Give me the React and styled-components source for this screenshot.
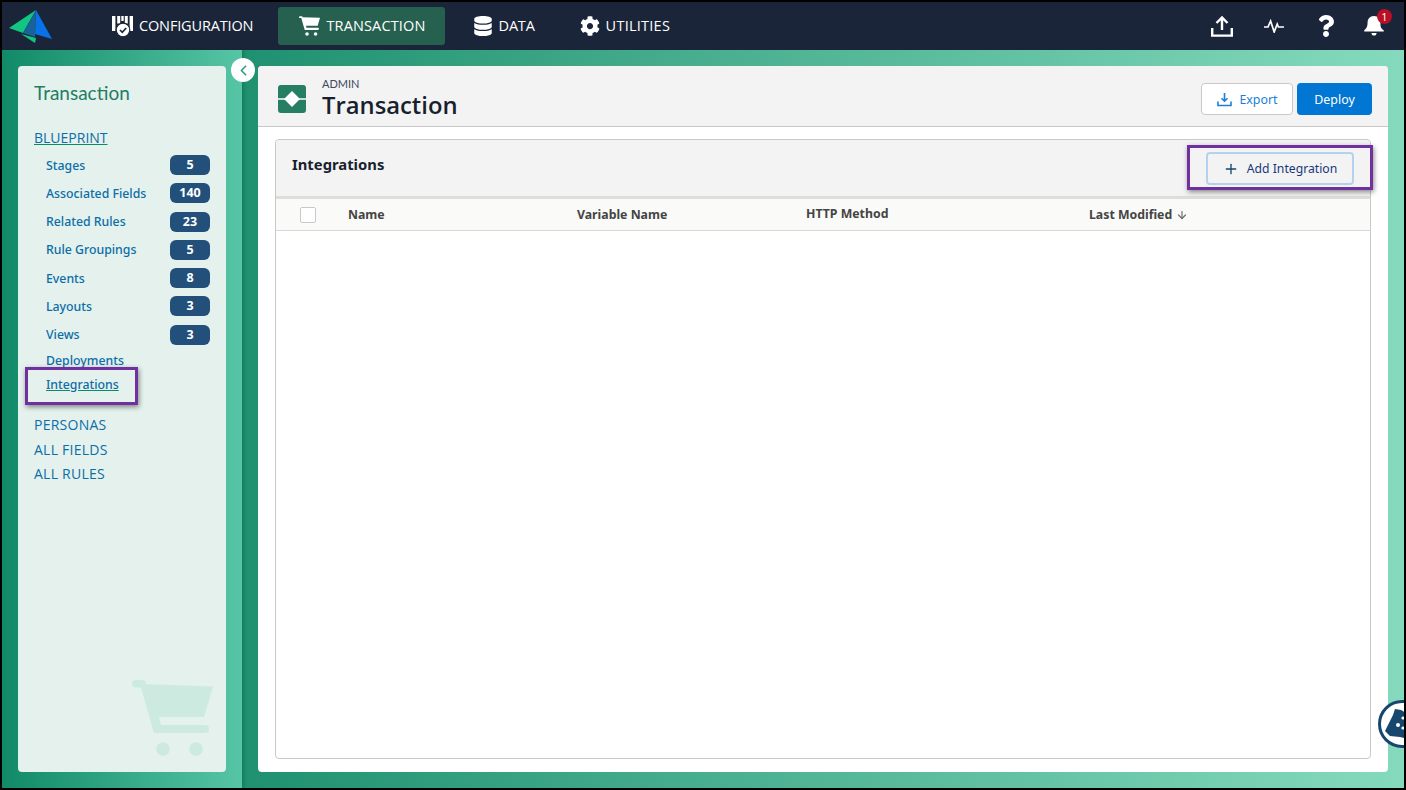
import styled, { createGlobalStyle } from "styled-components";
import { FaDatabase, FaCog, FaQuestion } from "react-icons/fa";
import { FiChevronLeft, FiArrowDown, FiPlus } from "react-icons/fi";

const GlobalStyle = createGlobalStyle`
	* {
		box-sizing: border-box;
	}
	body {
		margin: 0;
		background: #000;
		font-family: "Open Sans", "Noto Sans", sans-serif;
	}
`;

const CartIcon = ({ width = 21, height = 20, color = "#fff" }) => (
	<svg width={width} height={height} viewBox="0 0 81 76" fill={color}>
		<rect x="0" y="0" width="14" height="7.500" rx="3.700" />
		<path d="M8 4L81 6.500 72 37H27L29 45H73a4 4 0 0 1 0 8H22z" />
		<circle cx="31" cy="69" r="6.800" />
		<circle cx="64" cy="69" r="6.800" />
	</svg>
);

const ConfigIcon = () => (
	<svg width="21" height="21" viewBox="0 0 21 21" fill="#fff">
		<rect x="0" y="0" width="3.400" height="15" />
		<rect x="17.600" y="0" width="3.400" height="15" />
		<path d="M5.200 0h3v7.500h-3zM12.800 0h3v7.500h-3z" />
		<path d="M9.300 0h2.400v5H9.300z" />
		<circle cx="11" cy="14" r="6.800" stroke="#1b2539" strokeWidth="1.200" />
		<path d="M8 14l2.300 2.300 3.900-4.300" fill="none" stroke="#1b2539" strokeWidth="1.700" />
	</svg>
);

const UploadIcon = () => (
	<svg width="22" height="22" viewBox="0 0 22 22" fill="none" stroke="#fff" strokeWidth="2.400">
		<path d="M11 15V2.500M5.500 8L11 2.500 16.500 8" />
		<path d="M1.200 13v7.600h19.600V13" />
	</svg>
);

const PulseIcon = () => (
	<svg width="20" height="14" viewBox="0 0 20 14" fill="none" stroke="#fff" strokeWidth="1.700">
		<path d="M0 8h4l2.600-6 3.600 11 3-8 1.200 3H20" />
	</svg>
);

const BellIcon = () => (
	<svg width="22" height="22" viewBox="0 0 22 24" fill="#fff">
		<path d="M11 1c-4.600 0-7 3.200-7 7.400 0 4.200-1.300 6.200-3.500 8.100-.6.6-.3 1.500.6 1.500h19.800c.9 0 1.200-.9.6-1.500C18.300 14.600 18 12.600 18 8.400 18 4.200 15.600 1 11 1z" />
		<path d="M8.200 19.500h5.600c0 1.600-1.300 2.900-2.800 2.900s-2.800-1.300-2.800-2.900z" />
	</svg>
);

const Logo = () => (
	<svg width="43" height="33" viewBox="0 0 43 33">
		<path d="M0 18L27 0 14 23z" fill="#12c581" />
		<path d="M12 24l15 4-1 5z" fill="#12c581" />
		<path d="M27 0l16 29-17-5z" fill="#0a72e8" />
		<path d="M27 0L14 23l12 4z" fill="#17649b" />
	</svg>
);

const ExportIcon = () => (
	<svg width="15" height="15" viewBox="0 0 15 15" fill="none" stroke="#1b7fd6" strokeWidth="1.600">
		<path d="M7.500 1v8M4.500 6.200l3 3 3-3" />
		<path d="M1 9.500v4h13v-4" />
	</svg>
);

const ObjectIcon = () => (
	<svg width="28" height="28" viewBox="0 0 28 28">
		<rect width="28" height="28" rx="3" fill="#267f63" />
		<path d="M0 13.200h28v1.600H0z" fill="#f3f3f3" />
		<path d="M14 6l8 8-8 8-8-8z" fill="#fff" />
	</svg>
);

const navItems = [
	{ label: "CONFIGURATION", icon: <ConfigIcon />, after: 13, tracking: -0.15 },
	{ label: "TRANSACTION", icon: <CartIcon />, active: true, after: 16, tracking: 0.15 },
	{ label: "DATA", icon: <FaDatabase size={20} />, after: 21, tracking: -0.2 },
	{ label: "UTILITIES", icon: <FaCog size={20} />, after: 0, tracking: 0.25 },
];

const blueprintItems = [
	{ label: "Stages", count: 5 },
	{ label: "Associated Fields", count: 140 },
	{ label: "Related Rules", count: 23 },
	{ label: "Rule Groupings", count: 5 },
	{ label: "Events", count: 8 },
	{ label: "Layouts", count: 3 },
	{ label: "Views", count: 3 },
];

const App = () => {
	return (
		<Frame>
			<GlobalStyle />
			<TopBar>
				<LogoSlot>
					<Logo />
				</LogoSlot>
				<TopNav>
					{navItems.map((item) => (
						<TopNavItem
							key={item.label}
							$active={item.active}
							$after={item.after}
							$tracking={item.tracking}
						>
							{item.icon}
							<span>{item.label}</span>
						</TopNavItem>
					))}
				</TopNav>
				<TopActions>
					<UploadIcon />
					<PulseIcon />
					<FaQuestion size={22} color="#fff" />
					<BellSlot>
						<BellIcon />
						<BellBadge>1</BellBadge>
					</BellSlot>
				</TopActions>
			</TopBar>
			<Body>
				<SideColumn>
					<SidePanel>
						<SideTitle>Transaction</SideTitle>
						<SectionLink $current>BLUEPRINT</SectionLink>
						<SubList>
							{blueprintItems.map((item) => (
								<SubRow key={item.label}>
									<SubLink>{item.label}</SubLink>
									<Count>{item.count}</Count>
								</SubRow>
							))}
							<PlainRow>
								<SubLink>Deployments</SubLink>
							</PlainRow>
							<PlainRow $last>
								<SubLink $current>Integrations</SubLink>
								<SideCallout />
							</PlainRow>
						</SubList>
						<SectionLink>PERSONAS</SectionLink>
						<SectionLink>ALL FIELDS</SectionLink>
						<SectionLink>ALL RULES</SectionLink>
						<Watermark>
							<CartIcon width={81} height={76} color="#cdeae1" />
						</Watermark>
					</SidePanel>
					<CollapseButton>
						<FiChevronLeft size={17} color="#2aa27f" strokeWidth={2.400} />
					</CollapseButton>
				</SideColumn>
				<MainColumn>
					<Page>
						<PageHeader>
							<ObjectIcon />
							<PageTitles>
								<Eyebrow>ADMIN</Eyebrow>
								<PageTitle>Transaction</PageTitle>
							</PageTitles>
							<PageActions>
								<ExportButton>
									<ExportIcon />
									Export
								</ExportButton>
								<DeployButton>Deploy</DeployButton>
							</PageActions>
						</PageHeader>
						<PageBody>
							<Card>
								<CardHeader>
									<CardTitle>Integrations</CardTitle>
									<AddButton>
										<FiPlus size={16} color="#17466e" />
										Add Integration
										<AddCallout />
									</AddButton>
								</CardHeader>
								<TableHead>
									<Checkbox />
									<HeadCell>Name</HeadCell>
									<HeadCell>Variable Name</HeadCell>
									<HeadCell $raised>HTTP Method</HeadCell>
									<SortCell>
										Last Modified
										<FiArrowDown size={12} color="#706e6b" strokeWidth={2.400} />
									</SortCell>
								</TableHead>
							</Card>
						</PageBody>
					</Page>
				</MainColumn>
			</Body>
			<ChatBubble>
				<svg width="48" height="48" viewBox="0 0 48 48">
					<circle cx="24" cy="24" r="22.500" fill="#fff" stroke="#17466e" strokeWidth="3" />
					<path d="M7 31L15 15l2-6 6 1 7 4 4 26-12-3-10-1z" fill="#17466e" />
					<circle cx="20" cy="25" r="2" fill="#fff" />
					<circle cx="25" cy="18" r="1.600" fill="#fff" />
					<circle cx="25" cy="28" r="1.600" fill="#fff" />
				</svg>
			</ChatBubble>
		</Frame>
	);
};

export default App;

const Frame = styled.div`
	position: relative;
	width: 1406px;
	height: 790px;
	border: 2px solid #000;
	display: flex;
	flex-direction: column;
	overflow: hidden;
`;

const TopBar = styled.header`
	height: 48px;
	background-color: #1b2539;
	display: flex;
	align-items: center;
	flex-shrink: 0;
`;

const LogoSlot = styled.div`
	width: 98px;
	padding-left: 7px;
	display: flex;
	align-items: center;
`;

const TopNav = styled.nav`
	display: flex;
	align-items: center;
	height: 38px;
`;

const TopNavItem = styled.div`
	height: 38px;
	display: flex;
	align-items: center;
	gap: 6px;
	padding: 0 ${(props) => (props.$active ? "19px" : "12px")} 0
		${(props) => (props.$active ? "21px" : "12px")};
	margin-right: ${(props) => props.$after}px;
	background-color: ${(props) => (props.$active ? "#26614f" : "transparent")};
	border-radius: 3px;
	color: #fff;
	font-size: 14.500px;
	letter-spacing: ${(props) => props.$tracking}px;

	span {
		padding-bottom: 2px;
	}
`;

const TopActions = styled.div`
	margin-left: auto;
	display: flex;
	align-items: center;
	gap: 31px;
	padding-right: 19px;

	& > :last-child {
		margin-left: -5px;
	}
`;

const BellSlot = styled.div`
	position: relative;
	display: flex;
`;

const BellBadge = styled.span`
	position: absolute;
	top: -6px;
	right: -7px;
	width: 15px;
	height: 15px;
	border-radius: 50%;
	background-color: #ba0f26;
	color: #fff;
	font-size: 11px;
	line-height: 15px;
	text-align: center;
`;

const Body = styled.div`
	flex: 1;
	display: flex;
	min-height: 0;
`;

const SideColumn = styled.aside`
	position: relative;
	width: 240px;
	padding: 16px;
	background: linear-gradient(90deg, #118a67 0%, #56c5a5 100%);
	box-shadow: 2px 0 3px rgba(0, 60, 40, 0.25);
	z-index: 1;
`;

const SidePanel = styled.div`
	position: relative;
	height: 100%;
	padding: 16px 16px 0;
	background-color: #e4f1ec;
	border-radius: 4px;
`;

const SideTitle = styled.h2`
	margin: 0 0 25px;
	color: #1f7d63;
	font-family: "Lato", sans-serif;
	font-size: 19px;
	line-height: 22px;
	font-weight: 400;
`;

const SectionLink = styled.a`
	display: block;
	width: fit-content;
	margin-bottom: ${(props) => (props.$current ? "8px" : "6.600px")};
	color: #0b6ea8;
	font-size: 14px;
	line-height: 18px;
	letter-spacing: ${(props) => (props.$current ? "0" : "0.25px")};
	text-decoration: ${(props) => (props.$current ? "underline" : "none")};
	text-decoration-color: #0c8a68;
`;

const SubList = styled.div`
	margin-bottom: 23px;
`;

const SubRow = styled.div`
	display: flex;
	align-items: center;
	justify-content: space-between;
	height: 20px;
	margin: 0 0 8.300px 12px;

	&:nth-child(7) {
		margin-bottom: 6.500px;
	}
`;

const PlainRow = styled.div`
	position: relative;
	display: flex;
	align-items: center;
	height: 18px;
	margin: 0 0 ${(props) => (props.$last ? "0" : "6px")} 12px;
`;

const SubLink = styled.a`
	color: #0b6ea8;
	font-family: "Noto Sans", sans-serif;
	font-size: 12.300px;
	font-weight: 500;
	text-decoration: ${(props) => (props.$current ? "underline" : "none")};
	text-decoration-color: #0c8a68;
`;

const Count = styled.span`
	width: 40px;
	height: 20px;
	border-radius: 6px;
	background-color: #22507a;
	color: #fff;
	font-family: "Noto Sans", sans-serif;
	font-size: 12.500px;
	font-weight: 700;
	line-height: 20px;
	text-align: center;
`;

const Watermark = styled.div`
	position: absolute;
	right: 13px;
	bottom: 16px;
	display: flex;
`;

const CollapseButton = styled.button`
	position: absolute;
	top: 8px;
	right: -13px;
	width: 24px;
	height: 24px;
	padding: 0;
	border: none;
	border-radius: 50%;
	background-color: #fff;
	display: flex;
	align-items: center;
	justify-content: center;
`;

const MainColumn = styled.main`
	flex: 1;
	padding: 16px;
	background: linear-gradient(90deg, #1f9170 0%, #85dabd 100%);
`;

const Page = styled.section`
	height: 100%;
	background-color: #fff;
	border-radius: 4px;
	display: flex;
	flex-direction: column;
`;

const PageHeader = styled.div`
	height: 61px;
	padding: 6px 16px 0 20px;
	display: flex;
	align-items: center;
	background-color: #f3f3f3;
	border-bottom: 1px solid #c9c9c9;
	border-radius: 4px 4px 0 0;
	flex-shrink: 0;
`;

const PageTitles = styled.div`
	margin: 0 0 2px 16px;
	display: flex;
	flex-direction: column;
`;

const Eyebrow = styled.span`
	color: #3c4860;
	font-family: "Lato", sans-serif;
	font-size: 11px;
	line-height: 13px;
`;

const PageTitle = styled.h1`
	margin: 0;
	color: #181f2e;
	font-family: "Open Sans", sans-serif;
	font-size: 23.800px;
	line-height: 30px;
	font-weight: 600;
`;

const PageActions = styled.div`
	margin-left: auto;
	display: flex;
	gap: 4px;
`;

const ExportButton = styled.button`
	width: 92px;
	height: 32px;
	padding: 0 0 0 1px;
	display: flex;
	align-items: center;
	justify-content: center;
	gap: 7px;
	background-color: #fff;
	border: 1px solid #c9c9c9;
	border-radius: 4px;
	color: #1b7fd6;
	font-family: "Noto Sans", sans-serif;
	font-size: 12.400px;
`;

const DeployButton = styled.button`
	width: 75px;
	height: 32px;
	padding: 0;
	background-color: #0176d3;
	border: none;
	border-radius: 4px;
	color: #fff;
	font-family: "Noto Sans", sans-serif;
	font-size: 12.400px;
`;

const PageBody = styled.div`
	flex: 1;
	padding: 12px 17px 13px;
	min-height: 0;
`;

const Card = styled.div`
	height: 100%;
	border: 1px solid #c9c9c9;
	border-radius: 4px;
`;

const CardHeader = styled.div`
	height: 59px;
	padding: 0 16px;
	display: flex;
	justify-content: space-between;
	background-color: #f3f3f3;
	border-bottom: 3px solid #dddddb;
	border-radius: 4px 4px 0 0;
`;

const CardTitle = styled.h3`
	margin: 14px 0 0;
	color: #181f2e;
	font-family: "Noto Sans", sans-serif;
	font-size: 14.800px;
	line-height: 20px;
	font-weight: 700;
`;

const AddButton = styled.button`
	position: relative;
	width: 148px;
	height: 33px;
	margin-top: 12px;
	padding: 0;
	display: flex;
	align-items: center;
	justify-content: center;
	gap: 8px;
	background-color: #f3f3f3;
	border: 2px solid #b4d2ee;
	border-radius: 4px;
	color: #17387a;
	font-family: "Noto Sans", sans-serif;
	font-size: 12.200px;
`;

const Callout = styled.span`
	position: absolute;
	border: 3px solid #7030a0;
	box-shadow: 1px 2px 5px rgba(0, 0, 0, 0.45);
	pointer-events: none;
`;

const AddCallout = styled(Callout)`
	left: -21px;
	top: -9px;
	width: 186px;
	height: 45px;
`;

const SideCallout = styled(Callout)`
	left: -21px;
	top: -8px;
	width: 113px;
	height: 38px;
`;

const TableHead = styled.div`
	height: 32px;
	padding-left: 24px;
	display: grid;
	grid-template-columns: 48px 229px 229px 283px 1fr;
	align-items: center;
	background-color: #fafaf9;
	border-bottom: 1px solid #d8d8d8;
`;

const Checkbox = styled.span`
	width: 16px;
	height: 16px;
	background-color: #fff;
	border: 1px solid #c9c9c9;
	border-radius: 2px;
`;

const HeadCell = styled.span`
	color: #444444;
	font-family: "Noto Sans", sans-serif;
	font-size: 12.300px;
	font-weight: 700;
	margin-top: ${(props) => (props.$raised ? "-2px" : "0")};
`;

const SortCell = styled(HeadCell)`
	display: flex;
	align-items: center;
	gap: 4px;
`;

const ChatBubble = styled.div`
	position: absolute;
	left: 1376px;
	top: 698px;
	display: flex;
`;
